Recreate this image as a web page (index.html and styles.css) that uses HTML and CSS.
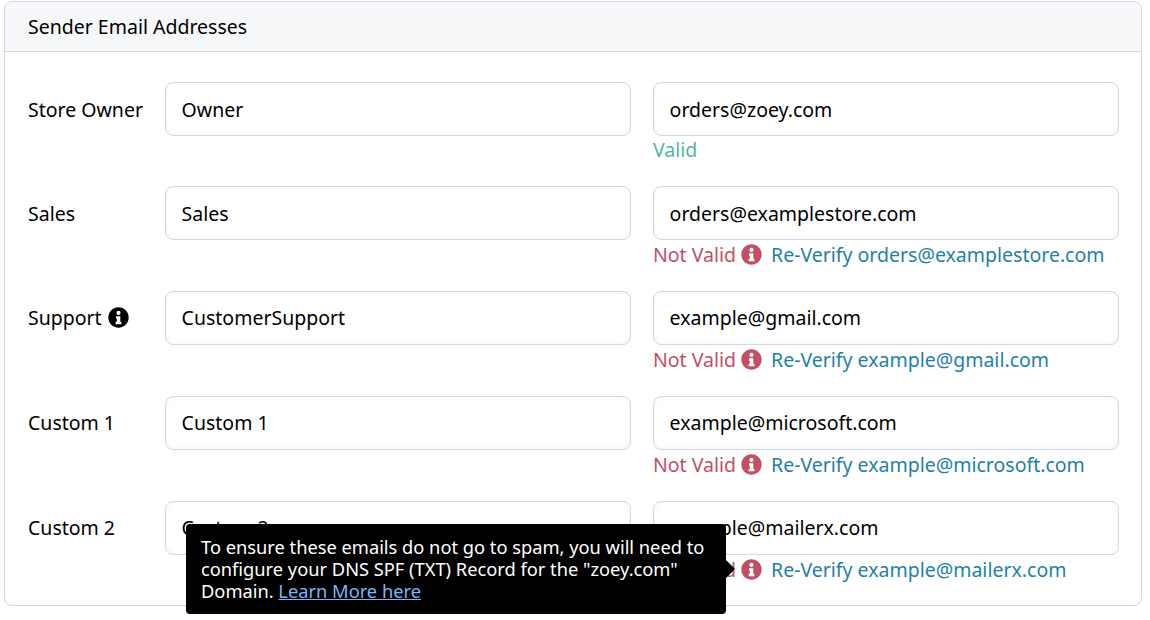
FILE: index.html
```html
<!DOCTYPE html>
<html lang="en">
<head>
<meta charset="utf-8">
<title>Sender Email Addresses</title>
<link rel="stylesheet" href="styles.css">
</head>
<body>
<svg class="sprite" aria-hidden="true"><symbol id="info" viewBox="0 0 512 512"><path fill="currentColor" fill-rule="evenodd" d="M256 8C119 8 8 119 8 256s111 248 248 248 248-111 248-248S393 8 256 8zM256 94a50 50 0 1 0 0 100a50 50 0 1 0 0-100zM196 224h104v138h26v60H186v-60h30v-78h-20z"/></symbol></svg>
<section class="card">
  <header class="card-header">Sender Email Addresses</header>
  <div class="card-body">
    <div class="row row-first">
      <span class="label">Store Owner</span>
      <div class="field"><input class="input" value="Owner"></div>
      <div class="field">
        <input class="input" value="orders@zoey.com">
        <div class="status"><span class="valid">Valid</span></div>
      </div>
    </div>
    <div class="row">
      <span class="label">Sales</span>
      <div class="field"><input class="input" value="Sales"></div>
      <div class="field">
        <input class="input" value="orders@examplestore.com">
        <div class="status"><span class="invalid">Not Valid</span><svg class="icon icon-invalid"><use href="#info"/></svg><a class="verify" href="#">Re-Verify orders@examplestore.com</a></div>
      </div>
    </div>
    <div class="row">
      <span class="label">Support<svg class="icon icon-label"><use href="#info"/></svg></span>
      <div class="field"><input class="input" value="CustomerSupport"></div>
      <div class="field">
        <input class="input" value="example@gmail.com">
        <div class="status"><span class="invalid">Not Valid</span><svg class="icon icon-invalid"><use href="#info"/></svg><a class="verify" href="#">Re-Verify example@gmail.com</a></div>
      </div>
    </div>
    <div class="row">
      <span class="label">Custom 1</span>
      <div class="field"><input class="input" value="Custom 1"></div>
      <div class="field">
        <input class="input" value="example@microsoft.com">
        <div class="status"><span class="invalid">Not Valid</span><svg class="icon icon-invalid"><use href="#info"/></svg><a class="verify" href="#">Re-Verify example@microsoft.com</a></div>
      </div>
    </div>
    <div class="row">
      <span class="label">Custom 2</span>
      <div class="field"><input class="input" value="Custom 2"></div>
      <div class="field">
        <input class="input" value="example@mailerx.com">
        <div class="status"><span class="invalid">Not Valid</span><svg class="icon icon-invalid"><use href="#info"/></svg><a class="verify" href="#">Re-Verify example@mailerx.com</a></div>
      </div>
    </div>
  </div>
  <div class="tooltip">To ensure these emails do not go to spam, you will need to configure your DNS SPF (TXT) Record for the "zoey.com" Domain. <a href="#">Learn More here</a></div>
</section>
</body>
</html>
```
FILE: styles.css
```css
* { box-sizing: border-box; }
html, body { margin: 0; background: #fff; }
body {
  min-height: 620px;
  padding: 1px 8px 0 4px;
  font-family: "Noto Sans", sans-serif;
  font-size: 19.5px;
  line-height: 27px;
  color: #000;
}
.sprite { display: none; }
.card {
  position: relative;
  width: 1138px;
  height: 605px;
  border: 1px solid #d3d6e6;
  border-radius: 8px;
  background: #fff;
}
.card-header {
  height: 50px;
  padding: 11px 23px 0;
  background: #f6f7f9;
  border-bottom: 1px solid #d3d6e6;
  border-radius: 7px 7px 0 0;
}
.card-body {
  display: flex;
  flex-direction: column;
  padding: 30.203125px 22px 0 23px;
}
.row {
  display: grid;
  grid-template-columns: 115px 1fr 1fr;
  column-gap: 22px;
  height: 104.765625px;
}
.row-first { height: 104px; }
.label {
  display: flex;
  align-items: center;
  height: 54px;
  white-space: nowrap;
}
.field { min-width: 0; }
.input {
  display: block;
  width: 100%;
  height: 54px;
  padding: 0 15.6px;
  border: 1px solid #d3d6e6;
  border-radius: 8px;
  background: #fff;
  box-shadow: inset 0 0 4px rgba(211, 214, 230, 0.35);
  font: inherit;
  color: #000;
  outline: none;
}
.status {
  display: flex;
  align-items: center;
  height: 27px;
  margin-top: 1px;
}
.row-first .status { margin-top: 0; }
.valid { color: #52b5a5; }
.invalid { color: #c14f65; }
.icon { display: block; width: 21px; height: 21px; flex: none; }
.icon-invalid { margin-left: 5px; color: #c14f65; }
.icon-label { margin-left: 6px; color: #000; }
.verify { margin-left: 9px; color: #1f7fa8; text-decoration: none; }
.tooltip {
  position: absolute;
  left: 181px;
  top: 522px;
  width: 540px;
  height: 90px;
  padding: 12px 15px;
  background: #000;
  border-radius: 4px;
  color: #fff;
  font-size: 18.27px;
  line-height: 22px;
}
.tooltip::after {
  content: "";
  position: absolute;
  right: -9px;
  top: 36px;
  border-style: solid;
  border-width: 9px 0 9px 9px;
  border-color: transparent transparent transparent #000;
}
.tooltip a { color: #7ab6f5; text-decoration: underline; }
```
